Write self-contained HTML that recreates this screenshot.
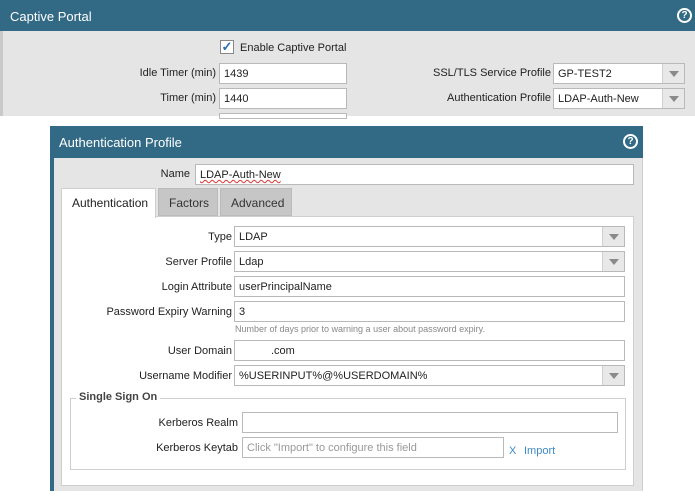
<!DOCTYPE html>
<html><head><style>
*{margin:0;padding:0;box-sizing:border-box}
body{width:695px;height:504px;background:#fff;position:relative;overflow:hidden;font-family:"Liberation Sans",sans-serif;font-size:11px;color:#222}
.a{position:absolute}
.bar{background:#326a86;color:#fff;font-size:13px}
.inp{position:absolute;background:#fff;border:1px solid #b9b9b9;height:21px;padding:4px 0 0 4px;font-size:11px;white-space:nowrap;overflow:hidden}
.arr{position:absolute;right:0;top:0;width:22px;height:19px;background:#e8e8e8;border-left:1px solid #d0d0d0}
.arr:after{content:"";position:absolute;left:6px;top:7px;border-left:5px solid transparent;border-right:5px solid transparent;border-top:6px solid #8a8a8a}
.lbl{position:absolute;text-align:right;white-space:nowrap}
.help{position:absolute;width:15px;height:15px;border-radius:50%;background:#326a86;color:#fff;font-size:10px;font-weight:bold;text-align:center;line-height:11px;border:2px solid #fff}
</style></head><body>
<div class="a bar" style="left:0;top:0;width:695px;height:31px"><span class="a" style="left:10px;top:9px">Captive Portal</span></div>
<div class="help" style="left:677px;top:8px">?</div>
<div class="a" style="left:0;top:31px;width:695px;height:85px;background:#e5e5e5"></div>
<div class="a" style="left:0;top:31px;width:3px;height:85px;background:#c9c9c9"></div>
<div class="a" style="left:220px;top:40px;width:14px;height:14px;border:1px solid #888;background:#fff;color:#2b6fb0;font-size:13px;line-height:12px;text-align:center;font-weight:bold">✓</div>
<div class="a" style="left:240px;top:42px">Enable Captive Portal</div>
<div class="lbl" style="right:479px;top:67px">Idle Timer (min)</div>
<div class="inp" style="left:219px;top:63px;width:128px">1439</div>
<div class="lbl" style="right:479px;top:92px">Timer (min)</div>
<div class="inp" style="left:219px;top:88px;width:128px">1440</div>
<div class="inp" style="left:219px;top:113px;width:128px;height:4px"></div>
<div class="lbl" style="right:144px;top:67px">SSL/TLS Service Profile</div>
<div class="inp" style="left:553px;top:63px;width:132px">GP-TEST2<div class="arr"></div></div>
<div class="lbl" style="right:144px;top:92px">Authentication Profile</div>
<div class="inp" style="left:553px;top:88px;width:132px">LDAP-Auth-New<div class="arr"></div></div>

<div class="a bar" style="left:50px;top:126px;width:593px;height:32px"><span class="a" style="left:9px;top:9px">Authentication Profile</span></div>
<div class="help" style="left:623px;top:134px">?</div>
<div class="a" style="left:50px;top:158px;width:593px;height:333px;background:#e5e5e5;border-left:4px solid #326a86;border-right:1px solid #cfcfcf"></div>
<div class="lbl" style="right:505px;top:168px">Name</div>
<div class="inp" style="left:195px;top:164px;width:439px;text-decoration:underline wavy #d33;text-decoration-thickness:1px">LDAP-Auth-New</div>
<div class="a" style="left:61px;top:216px;width:573px;height:270px;background:#fff;border:1px solid #cfcfcf"></div>
<div class="a" style="left:61px;top:188px;width:95px;height:30px;background:#fff;border:1px solid #cfcfcf;border-bottom:none;font-size:12px;padding:7px 0 0 10px">Authentication</div>
<div class="a" style="left:158px;top:188px;width:60px;height:28px;background:#c6c6c6;border:1px solid #bbb;font-size:12px;padding:7px 0 0 10px;color:#333">Factors</div>
<div class="a" style="left:220px;top:188px;width:72px;height:28px;background:#c6c6c6;border:1px solid #bbb;font-size:12px;padding:7px 0 0 10px;color:#333">Advanced</div>

<div class="lbl" style="right:463px;top:231px">Type</div>
<div class="inp" style="left:234px;top:226px;width:391px">LDAP<div class="arr"></div></div>
<div class="lbl" style="right:463px;top:256px">Server Profile</div>
<div class="inp" style="left:234px;top:251px;width:391px">Ldap<div class="arr"></div></div>
<div class="lbl" style="right:463px;top:281px">Login Attribute</div>
<div class="inp" style="left:234px;top:276px;width:391px">userPrincipalName</div>
<div class="lbl" style="right:463px;top:306px">Password Expiry Warning</div>
<div class="inp" style="left:234px;top:301px;width:391px">3</div>
<div class="a" style="left:235px;top:324px;font-size:9px;color:#888">Number of days prior to warning a user about password expiry.</div>
<div class="lbl" style="right:463px;top:345px">User Domain</div>
<div class="inp" style="left:234px;top:340px;width:391px;padding-left:36px">.com</div>
<div class="lbl" style="right:463px;top:370px">Username Modifier</div>
<div class="inp" style="left:234px;top:365px;width:391px">%USERINPUT%@%USERDOMAIN%<div class="arr"></div></div>

<div class="a" style="left:70px;top:398px;width:556px;height:72px;border:1px solid #cfcfcf"></div>
<div class="a" style="left:76px;top:391px;background:#fff;padding:0 3px;font-weight:bold;color:#444">Single Sign On</div>
<div class="lbl" style="right:457px;top:417px">Kerberos Realm</div>
<div class="inp" style="left:242px;top:412px;width:376px"></div>
<div class="lbl" style="right:457px;top:442px">Kerberos Keytab</div>
<div class="inp" style="left:242px;top:437px;width:262px;color:#999">Click "Import" to configure this field</div>
<div class="a" style="left:509px;top:445px;color:#3d8bc9">X</div>
<div class="a" style="left:524px;top:445px;color:#3d8bc9">Import</div>
</body></html>
